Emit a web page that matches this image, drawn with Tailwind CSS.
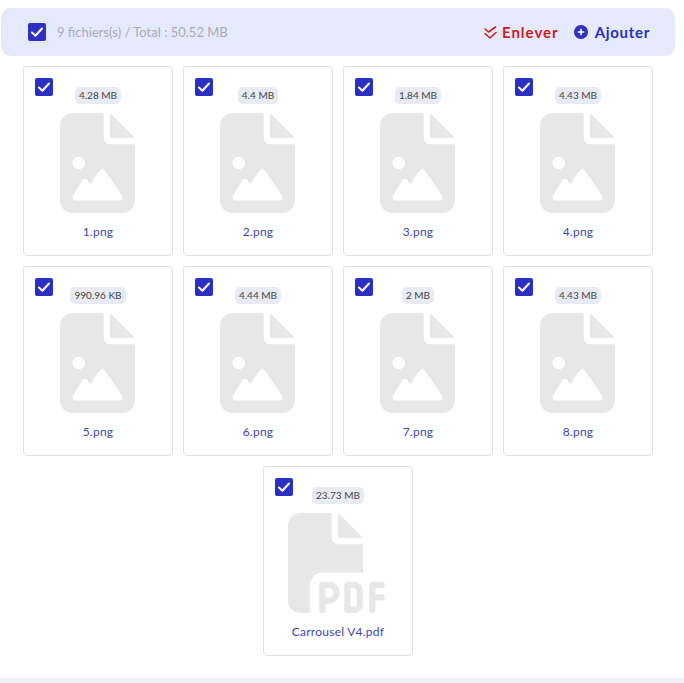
<html lang="fr">
<head>
    <meta charset="UTF-8">
    <title>Fichiers</title>
    <script src="https://cdn.jsdelivr.net/npm/@tailwindcss/browser@4"></script>
</head>
<body class="bg-white font-['Lato',sans-serif] overflow-hidden">
    <svg class="hidden">
        <symbol id="check" viewBox="0 0 18 18"><rect width="18" height="18" rx="2" fill="#2b2fc3"/><path d="M4 9.5l3.4 3.2L14 5.5" fill="none" stroke="#fff" stroke-width="2" stroke-linecap="round" stroke-linejoin="round"/></symbol>
        <symbol id="file-image" viewBox="0 0 384 512"><path fill="#e7e7e7" d="M64 0C28.7 0 0 28.7 0 64V448c0 35.3 28.7 64 64 64H320c35.3 0 64-28.7 64-64V160H256c-17.7 0-32-14.3-32-32V0H64zM256 0V128H384L256 0zM64 256a32 32 0 1 1 64 0 32 32 0 1 1 -64 0zm152 32c5.3 0 10.2 2.6 13.2 6.9l88 128c3.4 4.9 3.7 11.3 1 16.5s-8.2 8.6-14.2 8.6H216 176 128 80c-5.8 0-11.1-3.1-13.9-8.1s-2.8-11.2 .2-16.1l48-80c2.9-4.8 8.1-7.8 13.7-7.8s10.8 2.9 13.7 7.8l12.8 21.4 48.3-70.2c3-4.3 7.9-6.9 13.2-6.9z"/></symbol>
        <symbol id="file-pdf" viewBox="0 0 512 512"><path fill="#e7e7e7" d="M0 64C0 28.7 28.7 0 64 0H224V128c0 17.7 14.3 32 32 32H384V304H176c-35.3 0-64 28.7-64 64V512H64c-35.3 0-64-28.7-64-64V64zm384 64H256V0L384 128zM176 352h32c30.9 0 56 25.1 56 56s-25.1 56-56 56H192v32c0 8.8-7.2 16-16 16s-16-7.2-16-16V448 368c0-8.8 7.2-16 16-16zm32 80c13.3 0 24-10.7 24-24s-10.7-24-24-24H192v48h16zm96-80h32c26.5 0 48 21.5 48 48v64c0 26.5-21.5 48-48 48H304c-8.8 0-16-7.2-16-16V368c0-8.8 7.2-16 16-16zm32 128c8.8 0 16-7.2 16-16V400c0-8.8-7.2-16-16-16H320v96h16zm80-112c0-8.8 7.2-16 16-16h48c8.8 0 16 7.2 16 16s-7.2 16-16 16H448v32h32c8.8 0 16 7.2 16 16s-7.2 16-16 16H448v48c0 8.8-7.2 16-16 16s-16-7.2-16-16V432 368z"/></symbol>
    </svg>

    <div class="w-[684px] h-[683px] flex flex-col">
        <!-- Header -->
        <div class="ml-px mt-2 w-[674px] h-12 shrink-0 bg-[#e4eafb] rounded-[10px] flex items-center pl-[27px] pr-[25px]">
            <svg class="w-[18px] h-[18px]"><use href="#check"/></svg>
            <span class="ml-[11px] mt-px text-[13px] text-[#a9abb3]">9 fichiers(s) / Total : 50.52 MB</span>
            <button class="ml-auto flex items-center gap-[5px] text-[15px] font-bold tracking-[1px] text-[#d01c1c]">
                <svg class="w-[13px] h-[13px]" viewBox="0 0 13 13" fill="none" stroke="#d01c1c" stroke-width="1.6" stroke-linecap="round" stroke-linejoin="round"><path d="M1 3l3.6 3L11.500 1"/><path d="M1 7.500l5 4.500 6-5.500"/></svg>
                Enlever
            </button>
            <button class="ml-[15px] flex items-center gap-[7px] text-[15px] font-bold tracking-[0.7px] text-[#2b2fc3]">
                <svg class="w-[14px] h-[14px]" viewBox="0 0 14 14"><circle cx="7" cy="7" r="7" fill="#2b2fc3"/><path d="M7 4.300v5.400M4.300 7h5.400" stroke="#fff" stroke-width="1.600" stroke-linecap="round"/></svg>
                Ajouter
            </button>
        </div>

        <!-- Cards -->
        <div class="w-[676px] mt-[10px] flex flex-wrap justify-center gap-[10px]">
            <div class="relative w-[150px] h-[190px] border border-[#dedede] rounded-[4px] flex flex-col items-center pt-[20px]">
                <svg class="absolute left-[11px] top-[11px] w-[18px] h-[18px]"><use href="#check"/></svg>
                <span class="h-[17px] px-[4px] rounded-[5px] bg-[#e8ebf3] text-[10px] leading-[17px] text-[#444]">4.28 MB</span>
                <svg class="mt-[9px] mr-px w-[75px] h-[100px]"><use href="#file-image"/></svg>
                <span class="mt-[11px] text-xs tracking-[0.25px] leading-4 text-[#3b46b8]">1.png</span>
            </div>
            <div class="relative w-[150px] h-[190px] border border-[#dedede] rounded-[4px] flex flex-col items-center pt-[20px]">
                <svg class="absolute left-[11px] top-[11px] w-[18px] h-[18px]"><use href="#check"/></svg>
                <span class="h-[17px] px-[4px] rounded-[5px] bg-[#e8ebf3] text-[10px] leading-[17px] text-[#444]">4.4 MB</span>
                <svg class="mt-[9px] mr-px w-[75px] h-[100px]"><use href="#file-image"/></svg>
                <span class="mt-[11px] text-xs tracking-[0.25px] leading-4 text-[#3b46b8]">2.png</span>
            </div>
            <div class="relative w-[150px] h-[190px] border border-[#dedede] rounded-[4px] flex flex-col items-center pt-[20px]">
                <svg class="absolute left-[11px] top-[11px] w-[18px] h-[18px]"><use href="#check"/></svg>
                <span class="h-[17px] px-[4px] rounded-[5px] bg-[#e8ebf3] text-[10px] leading-[17px] text-[#444]">1.84 MB</span>
                <svg class="mt-[9px] mr-px w-[75px] h-[100px]"><use href="#file-image"/></svg>
                <span class="mt-[11px] text-xs tracking-[0.25px] leading-4 text-[#3b46b8]">3.png</span>
            </div>
            <div class="relative w-[150px] h-[190px] border border-[#dedede] rounded-[4px] flex flex-col items-center pt-[20px]">
                <svg class="absolute left-[11px] top-[11px] w-[18px] h-[18px]"><use href="#check"/></svg>
                <span class="h-[17px] px-[4px] rounded-[5px] bg-[#e8ebf3] text-[10px] leading-[17px] text-[#444]">4.43 MB</span>
                <svg class="mt-[9px] mr-px w-[75px] h-[100px]"><use href="#file-image"/></svg>
                <span class="mt-[11px] text-xs tracking-[0.25px] leading-4 text-[#3b46b8]">4.png</span>
            </div>
            <div class="relative w-[150px] h-[190px] border border-[#dedede] rounded-[4px] flex flex-col items-center pt-[20px]">
                <svg class="absolute left-[11px] top-[11px] w-[18px] h-[18px]"><use href="#check"/></svg>
                <span class="h-[17px] px-[4px] rounded-[5px] bg-[#e8ebf3] text-[10px] leading-[17px] text-[#444]">990.96 KB</span>
                <svg class="mt-[9px] mr-px w-[75px] h-[100px]"><use href="#file-image"/></svg>
                <span class="mt-[11px] text-xs tracking-[0.25px] leading-4 text-[#3b46b8]">5.png</span>
            </div>
            <div class="relative w-[150px] h-[190px] border border-[#dedede] rounded-[4px] flex flex-col items-center pt-[20px]">
                <svg class="absolute left-[11px] top-[11px] w-[18px] h-[18px]"><use href="#check"/></svg>
                <span class="h-[17px] px-[4px] rounded-[5px] bg-[#e8ebf3] text-[10px] leading-[17px] text-[#444]">4.44 MB</span>
                <svg class="mt-[9px] mr-px w-[75px] h-[100px]"><use href="#file-image"/></svg>
                <span class="mt-[11px] text-xs tracking-[0.25px] leading-4 text-[#3b46b8]">6.png</span>
            </div>
            <div class="relative w-[150px] h-[190px] border border-[#dedede] rounded-[4px] flex flex-col items-center pt-[20px]">
                <svg class="absolute left-[11px] top-[11px] w-[18px] h-[18px]"><use href="#check"/></svg>
                <span class="h-[17px] px-[4px] rounded-[5px] bg-[#e8ebf3] text-[10px] leading-[17px] text-[#444]">2 MB</span>
                <svg class="mt-[9px] mr-px w-[75px] h-[100px]"><use href="#file-image"/></svg>
                <span class="mt-[11px] text-xs tracking-[0.25px] leading-4 text-[#3b46b8]">7.png</span>
            </div>
            <div class="relative w-[150px] h-[190px] border border-[#dedede] rounded-[4px] flex flex-col items-center pt-[20px]">
                <svg class="absolute left-[11px] top-[11px] w-[18px] h-[18px]"><use href="#check"/></svg>
                <span class="h-[17px] px-[4px] rounded-[5px] bg-[#e8ebf3] text-[10px] leading-[17px] text-[#444]">4.43 MB</span>
                <svg class="mt-[9px] mr-px w-[75px] h-[100px]"><use href="#file-image"/></svg>
                <span class="mt-[11px] text-xs tracking-[0.25px] leading-4 text-[#3b46b8]">8.png</span>
            </div>
            <div class="relative w-[150px] h-[190px] border border-[#dedede] rounded-[4px] flex flex-col items-center pt-[20px]">
                <svg class="absolute left-[11px] top-[11px] w-[18px] h-[18px]"><use href="#check"/></svg>
                <span class="h-[17px] px-[4px] rounded-[5px] bg-[#e8ebf3] text-[10px] leading-[17px] text-[#444]">23.73 MB</span>
                <svg class="mt-[9px] w-[100px] h-[100px]"><use href="#file-pdf"/></svg>
                <span class="mt-[11px] text-xs tracking-[0.25px] leading-4 text-[#3b46b8]">Carrousel V4.pdf</span>
            </div>
        </div>

        <!-- Bottom strip -->
        <div class="mt-auto h-[5px] shrink-0 bg-[#f1f2f9]"></div>
    </div>
</body>
</html>
